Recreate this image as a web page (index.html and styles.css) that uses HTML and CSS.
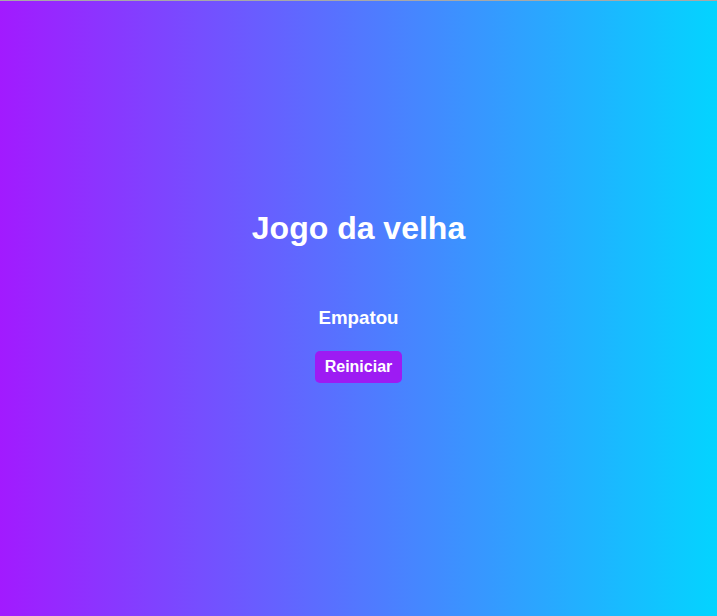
FILE: index.html
```html
<!DOCTYPE html>
<html lang="pt">
<head>
<meta charset="utf-8">
<title>Jogo da velha</title>
<link rel="stylesheet" href="styles.css">
</head>
<body>
<main class="game">
  <h1 class="title">Jogo da velha</h1>
  <h3 class="status">Empatou</h3>
  <button class="restart">Reiniciar</button>
</main>
</body>
</html>
```
FILE: styles.css
```css
* { box-sizing: border-box; }
html, body { margin: 0; height: 100%; }
body {
  font-family: "Liberation Sans", Arial, sans-serif;
  background: linear-gradient(to right, #a21aff, #03d4ff);
  border-top: 1px solid #a8a8a8;
  color: #fff;
  display: flex;
  align-items: center;
  justify-content: center;
  padding-bottom: 25px;
}
.game {
  display: flex;
  flex-direction: column;
  align-items: center;
}
.title {
  margin: 0;
  font-size: 32px;
  font-weight: bold;
}
.status {
  margin: 60px 0 0;
  font-size: 18.72px;
  font-weight: bold;
}
.restart {
  margin-top: 22px;
  font-family: inherit;
  font-size: 16px;
  line-height: 18px;
  font-weight: bold;
  color: #fff;
  background: #9d1bf3;
  border: none;
  border-radius: 5px;
  padding: 7px 10px;
  height: 32px;
  cursor: pointer;
}
```
